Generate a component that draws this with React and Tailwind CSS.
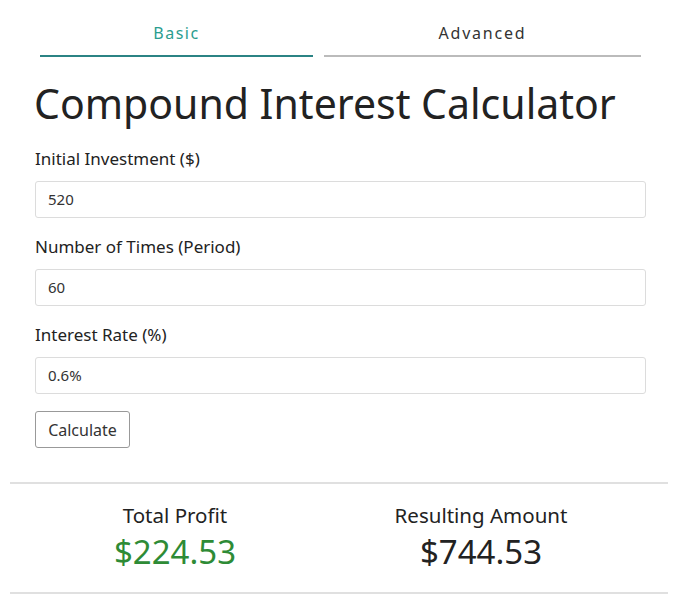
export default function App() {
  return (
    <div className="w-[678px] h-[600px] bg-white text-[#222] font-['Noto_Sans',sans-serif] overflow-hidden">
      <div className="flex pl-[40px] gap-[11px] pt-[20px]">
        <div className="w-[273px] h-[37px] pb-[9px] flex items-center justify-center border-b-2 border-[#2b8384] text-[#2a9d8f] text-[16px] tracking-[1.5px]">Basic</div>
        <div className="w-[317px] h-[37px] pb-[9px] flex items-center justify-center border-b-2 border-[#bbbbbb] text-[#333] text-[16px] tracking-[1.8px]">Advanced</div>
      </div>
      <h1 className="mt-[22px] ml-[34px] text-[41px] leading-[48px] text-[#222]">Compound Interest Calculator</h1>
      <div className="pl-[35px] pr-[32px] mt-[20px]">
        <div className="text-[17px] leading-[24px] text-[#222]">Initial Investment ($)</div>
        <div className="mt-[10px] h-[37px] border border-[#dcdcdc] rounded-[3px] flex items-center px-[12px] text-[15px] text-[#333]">520</div>
        <div className="mt-[17px] text-[17px] leading-[24px] text-[#222]">Number of Times (Period)</div>
        <div className="mt-[10px] h-[37px] border border-[#dcdcdc] rounded-[3px] flex items-center px-[12px] text-[15px] text-[#333]">60</div>
        <div className="mt-[17px] text-[17px] leading-[24px] text-[#222]">Interest Rate (%)</div>
        <div className="mt-[10px] h-[37px] border border-[#dcdcdc] rounded-[3px] flex items-center px-[12px] text-[15px] text-[#333]">0.6%</div>
        <button className="mt-[17px] h-[37px] w-[95px] border border-[#999] rounded-[3px] bg-white text-[16px] text-[#333] flex items-center justify-center">Calculate</button>
      </div>
      <div className="mx-[10px] mt-[34px] border-t-2 border-[#e0e0e0]">
        <div className="flex pt-[17px] pb-[18px]">
          <div className="w-[330px] flex flex-col items-center">
            <div className="text-[20.5px] leading-[28px] text-[#222]">Total Profit</div>
            <div className="text-[33px] leading-[45px] text-[#2e8b36]">$224.53</div>
          </div>
          <div className="w-[282px] flex flex-col items-center">
            <div className="text-[20.5px] leading-[28px] text-[#222]">Resulting Amount</div>
            <div className="text-[33px] leading-[45px] text-[#222]">$744.53</div>
          </div>
        </div>
        <div className="border-t-2 border-[#e0e0e0]"></div>
      </div>
    </div>
  );
}
